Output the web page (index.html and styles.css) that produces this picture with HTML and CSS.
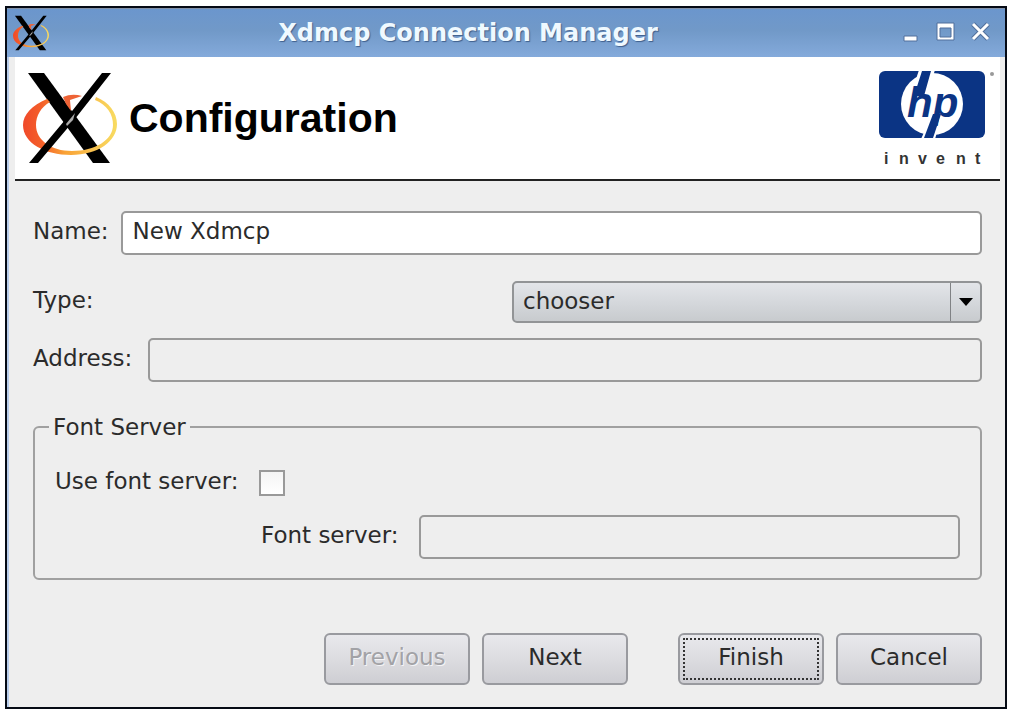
FILE: index.html
```html
<!DOCTYPE html>
<html lang="en">
<head>
<meta charset="utf-8">
<title>Xdmcp Connection Manager</title>
<link rel="stylesheet" href="styles.css">
</head>
<body>
<svg class="symbols" aria-hidden="true">
  <defs>
    <linearGradient id="ring-fill" x1="0" y1="0" x2="1" y2="0">
      <stop offset="0" stop-color="#f0492a"/>
      <stop offset=".2" stop-color="#f4602a"/>
      <stop offset=".45" stop-color="#f9a336"/>
      <stop offset="1" stop-color="#f8dc62"/>
    </linearGradient>
  </defs>
  <symbol id="x-logo" viewBox="0 0 94 94">
    <path fill="#000" d="M5 2H21L87 92H70Z"/>
    <path fill="url(#ring-fill)" fill-rule="evenodd" d="M24 28C9 34 0 44 0 54C0 72 22 84 48 84C75 84 94 70 94 53C94 42 86 31 73 26L72 29C84 34 90 43 90 54C90 69 72 80 49 80C28 80 13 69 13 54C13 45 18 36 27 31Z"/>
    <path fill="#ee6336" d="M40 26Q49 22 59 25L47 29L48 40L43 33Z"/>
    <path fill="#000" d="M79 2H88L48 53L15 92H6L42 49Z"/>
    <path fill="#aaa" d="M43 53L52 42L50 49L44 55Z"/>
  </symbol>
</svg>
<main class="window">
  <header class="titlebar">
    <svg class="titlebar-icon" aria-hidden="true"><use href="#x-logo"/></svg>
    <h1 class="title">Xdmcp Connection Manager</h1>
    <div class="window-controls">
      <button type="button" class="window-button" aria-label="Minimize"><svg width="20" height="22" viewBox="0 0 20 22"><path d="M3 14H16V19H3Z" fill="#fff" stroke="#506f9b"/></svg></button>
      <button type="button" class="window-button" aria-label="Maximize"><svg width="20" height="22" viewBox="0 0 20 22"><path fill="#fff" stroke="#506f9b" fill-rule="evenodd" d="M1 1H18V18H1ZM4 6H15V15H4Z"/></svg></button>
      <button type="button" class="window-button" aria-label="Close"><svg width="20" height="22" viewBox="0 0 20 22"><path d="M2 2L17 17M17 2L2 17" stroke="#506f9b" stroke-width="5"/><path d="M2 2L17 17M17 2L2 17" stroke="#fff" stroke-width="3"/></svg></button>
    </div>
  </header>
  <form class="page">
    <div class="banner">
      <svg class="banner-icon" aria-hidden="true"><use href="#x-logo"/></svg>
      <h2 class="heading">Configuration</h2>
      <svg class="brand" width="118" height="96" viewBox="0 0 118 96" role="img" aria-label="hp invent">
        <rect x="1" y="1" width="106" height="67" rx="6" fill="#0b3484"/>
        <circle cx="54" cy="34" r="31" fill="#fff"/>
        <path fill="#fff" d="M41 0H57L53 12H37ZM49 56H61L57 69H43Z"/>
        <path fill="#0b3484" d="M44 1H53L46 26H36ZM55 44H63L55 68H46Z"/>
        <text class="brand-mark" x="29" y="47">hp</text>
        <circle cx="114" cy="4" r="2" fill="#999"/>
        <text class="brand-word" x="6 21 40 58 78 97" y="94">invent</text>
      </svg>
    </div>
    <div class="fields">
      <div class="row name-row">
        <label for="name">Name:</label>
        <input class="text-box" id="name" type="text" value="New Xdmcp">
      </div>
      <div class="row type-row">
        <label for="type">Type:</label>
        <div class="dropdown">
          <select id="type"><option>chooser</option></select>
          <svg class="arrow" width="14" height="8" viewBox="0 0 14 8" aria-hidden="true"><path d="M0 0H14L7 8Z"/></svg>
        </div>
      </div>
      <div class="row address-row">
        <label for="address">Address:</label>
        <input class="text-box" id="address" type="text" disabled>
      </div>
      <fieldset class="group">
        <legend>Font Server</legend>
        <div class="row check-row">
          <label for="use-server">Use font server:</label>
          <input class="check" id="use-server" type="checkbox">
        </div>
        <div class="row server-row">
          <label for="server">Font server:</label>
          <input class="text-box" id="server" type="text" disabled>
        </div>
      </fieldset>
    </div>
    <div class="actions">
      <button type="button" class="button" disabled>Previous</button>
      <button type="button" class="button">Next</button>
      <button type="submit" class="button default">Finish</button>
      <button type="button" class="button">Cancel</button>
    </div>
  </form>
</main>
</body>
</html>
```

FILE: styles.css
```css
* {
  box-sizing: border-box;
}

body {
  margin: 0;
  padding: 6px 5px;
  background: #fff;
  color: #2b2b2b;
  font: 23px/28px "DejaVu Sans", sans-serif;
}

.symbols {
  position: absolute;
  width: 0;
  height: 0;
}

.window {
  display: flex;
  flex-direction: column;
  min-height: calc(100vh - 12px);
  border: 2px solid #050a14;
  background: #eee;
}

.titlebar {
  display: grid;
  grid-template-columns: 36px 1fr 104px;
  align-items: center;
  height: 49px;
  padding: 0 14px 0 6px;
  border-top: 1px solid #8392a8;
  background: linear-gradient(#6b96cd, #7199c8 45%, #84aadb);
}

.titlebar-icon {
  width: 36px;
  height: 36px;
}

.title {
  margin: 0;
  color: #eff9ff;
  font-size: 24px;
  line-height: 28px;
  text-align: center;
  text-shadow: 1px 1px 1px #3f5f8c;
}

.window-controls {
  display: flex;
  justify-content: flex-end;
  gap: 15px;
}

.window-button {
  width: 20px;
  height: 22px;
  padding: 0;
  border: 0;
  background: none;
}

.window-button svg {
  display: block;
}

.page {
  display: flex;
  flex: 1;
  flex-direction: column;
  padding: 0 5px 0 6px;
  border-left: 2px solid #b9cdea;
}

.banner {
  display: flex;
  align-items: center;
  gap: 12px;
  height: 124px;
  padding: 0 4px 0 8px;
  border-bottom: 2px solid #222;
  background: #fff;
}

.banner-icon {
  width: 94px;
  height: 94px;
}

.heading {
  flex: 1;
  margin: 0;
  color: #000;
  font: bold 41px/48px "Liberation Sans", Arial, sans-serif;
}

.brand-mark {
  fill: #0b3484;
  font: italic bold 42px "Liberation Sans", Arial, sans-serif;
}

.brand-word {
  fill: #333;
  font: bold 16px "Liberation Sans", Arial, sans-serif;
}

.fields {
  display: flex;
  flex-direction: column;
  padding: 30px 18px 0;
}

.row {
  display: flex;
  align-items: center;
  gap: 12px;
}

.row label {
  padding-bottom: 4px;
}

.name-row {
  margin-bottom: 26px;
}

.type-row {
  justify-content: space-between;
  margin-bottom: 15px;
}

.address-row {
  gap: 16px;
}

.text-box {
  flex: 1;
  min-width: 0;
  height: 44px;
  padding: 0 10px 4px;
  border: 2px solid #999;
  border-radius: 5px;
  background: #fff;
  color: #2b2b2b;
  font: inherit;
}

.text-box:disabled {
  background: #eee;
}

.dropdown {
  position: relative;
  width: 470px;
}

.dropdown select {
  display: block;
  width: 100%;
  height: 42px;
  padding: 0 40px 2px 9px;
  border: 2px solid #929496;
  border-radius: 5px;
  appearance: none;
  background: linear-gradient(#e3e5e9, #d5d8dc 50%, #c8cbce);
  color: #2b2b2b;
  font: inherit;
}

.dropdown::after {
  position: absolute;
  top: 2px;
  right: 31px;
  bottom: 2px;
  width: 1px;
  background: #808285;
  content: "";
}

.arrow {
  position: absolute;
  top: 17px;
  right: 9px;
}

.group {
  min-width: 0;
  margin: 31px 0 0;
  padding: 26px 20px 19px;
  border: 2px solid #a0a0a0;
  border-radius: 6px;
}

.group legend {
  margin-left: -6px;
  padding: 0 4px;
}

.check-row,
.server-row {
  gap: 20px;
}

.check {
  width: 26px;
  height: 26px;
  margin: 0;
  border: 2px solid #999;
  appearance: none;
  background: linear-gradient(#f4f4f4, #fff);
}

.server-row {
  margin-top: 16px;
  padding-left: 206px;
}

.actions {
  display: flex;
  justify-content: flex-end;
  gap: 12px;
  margin-top: auto;
  padding: 0 18px 22px;
}

.button {
  width: 146px;
  height: 52px;
  padding: 0 0 4px;
  border: 2px solid #999a9f;
  border-radius: 6px;
  background: linear-gradient(#e8e8ec, #dcdce0 50%, #ceced3);
  color: #2b2b2b;
  font: inherit;
}

.button:disabled {
  color: #a2a2a6;
  text-shadow: 1px 1px 0 #f4f4f6;
}

.default {
  margin-left: 38px;
  outline: 2px dotted #333;
  outline-offset: -7px;
}
```
